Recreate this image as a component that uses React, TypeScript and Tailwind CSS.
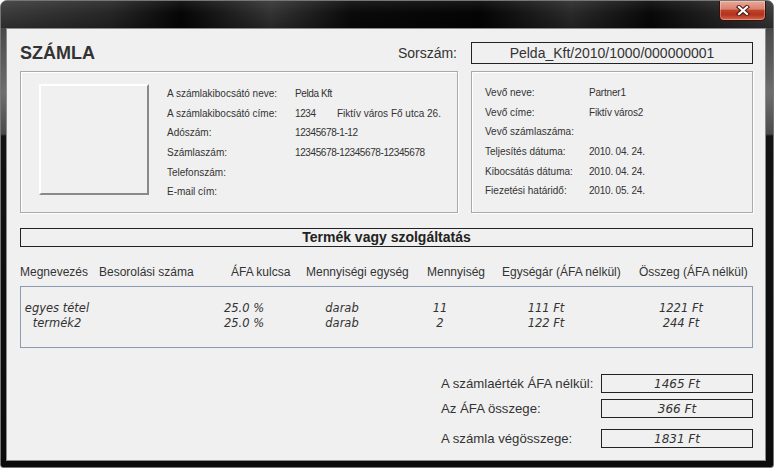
import React from "react";

const arial = "font-['Liberation_Sans',Arial,sans-serif]";
const dejavu = "font-['DejaVu_Sans',Verdana,sans-serif]";

const seller: [string, string, string?][] = [
  ["A számlakibocsátó neve:", "Pelda Kft"],
  ["A számlakibocsátó címe:", "1234", "Fiktív város Fő utca 26."],
  ["Adószám:", "12345678-1-12"],
  ["Számlaszám:", "12345678-12345678-12345678"],
  ["Telefonszám:", ""],
  ["E-mail cím:", ""],
];

const buyer: [string, string][] = [
  ["Vevő neve:", "Partner1"],
  ["Vevő címe:", "Fiktív város2"],
  ["Vevő számlaszáma:", ""],
  ["Teljesítés dátuma:", "2010. 04. 24."],
  ["Kibocsátás dátuma:", "2010. 04. 24."],
  ["Fiezetési határidő:", "2010. 05. 24."],
];

const headers = [
  "Megnevezés",
  "Besorolási száma",
  "ÁFA kulcsa",
  "Mennyiségi egység",
  "Mennyiség",
  "Egységár (ÁFA nélkül)",
  "Összeg (ÁFA nélkül)",
];

const items = [
  { name: "egyes tétel", vat: "25.0 %", unit: "darab", qty: "11", price: "111 Ft", total: "1221 Ft" },
  { name: "termék2", vat: "25.0 %", unit: "darab", qty: "2", price: "122 Ft", total: "244 Ft" },
];

function CloseButton() {
  return (
    <div className="absolute right-[7px] top-0 w-[47px] h-[20px] rounded-b-[5px] border border-t-0 border-[#3a0f08] bg-[linear-gradient(180deg,#eaa898_0%,#d98370_42%,#c0402a_50%,#b2331f_72%,#d8664b_100%)] shadow-[inset_0_0_0_1px_rgba(255,255,255,0.3)] flex items-center justify-center">
      <svg width="14" height="11" viewBox="0 0 14 11">
        <path d="M3 2 L11 9 M11 2 L3 9" stroke="#4a1710" strokeWidth="4.2" strokeLinecap="square" />
        <path d="M3 2 L11 9 M11 2 L3 9" stroke="#ffffff" strokeWidth="2.2" strokeLinecap="square" />
      </svg>
    </div>
  );
}

function Total({ label, value, className = "" }: { label: string; value: string; className?: string }) {
  return (
    <div className={`flex items-center h-[19px] ${className}`}>
      <div className={`w-[160px] text-[13.2px] text-[#333] ${arial}`}>{label}</div>
      <div className={`w-[152px] h-[19px] border border-[#222] flex items-center justify-center italic text-[12px] text-[#333] ${dejavu}`}>
        {value}
      </div>
    </div>
  );
}

export default function App() {
  return (
    <div className="relative w-[774px] h-[468px] flex flex-col overflow-hidden rounded-t-[7px] rounded-b-[3px] border border-[#767676] bg-[linear-gradient(180deg,#3a3a3a_0px,#6e6e6e_92px,#4a4a4a_133px,#131313_135px,#0b0b0b_100%)]">
      {/* title bar */}
      <div className="relative h-[27px] bg-[linear-gradient(90deg,#3b3b3b_0px,#262626_110px,#050505_180px,#333333_270px,#0a0a0a_350px,#040404_480px,#2a2a2a_570px,#080808_650px,#3a3a3a_774px)]">
        <div className="absolute inset-0 bg-[linear-gradient(180deg,rgba(255,255,255,0.08)_0%,rgba(0,0,0,0)_45%,rgba(0,0,0,0.25)_100%)]" />
        <CloseButton />
      </div>

      {/* client area */}
      <div className={`flex-1 ml-[5px] mr-[7px] mb-[6px] border border-[#8c8c8c] bg-[#f0f0f0] pl-[13px] pr-[12px] flex flex-col text-[#333] ${arial}`}>
        <div className="flex items-center h-[22px] mt-[13px]">
          <div className="font-bold text-[18px] leading-none text-[#333]">SZÁMLA</div>
          <div className="ml-auto text-[14px] leading-none">Sorszám:</div>
          <div className="ml-[14px] w-[282px] h-[22px] border border-[#222] flex items-center justify-center text-[14px] text-[#333]">
            Pelda_Kft/2010/1000/000000001
          </div>
        </div>

        <div className="flex gap-[13px] mt-[7px] h-[142px]">
          <div className="w-[438px] border border-[#a9a9a9] shadow-[inset_1px_1px_0_#ffffff,1px_1px_0_#ffffff] flex pl-[18px] pt-[12px]">
            <div className="w-[110px] h-[111px] border-2 border-t-white border-l-white border-r-[#8a8a8a] border-b-[#8a8a8a]" />
            <div className="ml-[18px] text-[10px]">
              {seller.map(([label, value, extra]) => (
                <div key={label} className="flex items-center h-[19.6px]">
                  <div className="w-[128px]">{label}</div>
                  <div className={`tracking-[-0.4px] ${extra ? "w-[42px]" : ""}`}>{value}</div>
                  {extra && <div>{extra}</div>}
                </div>
              ))}
            </div>
          </div>
          <div className="w-[282px] border border-[#a9a9a9] shadow-[inset_1px_1px_0_#ffffff,1px_1px_0_#ffffff] pl-[13px] pt-[11px] text-[10px]">
            {buyer.map(([label, value]) => (
              <div key={label} className="flex items-center h-[19.6px]">
                <div className="w-[104px]">{label}</div>
                <div className="tracking-[-0.2px]">{value}</div>
              </div>
            ))}
          </div>
        </div>

        <div className="mt-[15px] h-[19px] border border-[#222] flex items-center justify-center font-bold text-[14px] text-[#222]">
          Termék vagy szolgáltatás
        </div>

        <div className="mt-[16px] h-[18px] grid grid-cols-[79px_132px_75px_121px_75px_137px_113px] items-center text-[12px] whitespace-nowrap">
          {headers.map((h) => (
            <div key={h}>{h}</div>
          ))}
        </div>

        <div className={`mt-[5px] h-[62px] border border-[#8b9bb2] pt-[14px] italic text-[11.5px] text-[#333] ${dejavu}`}>
          {items.map((it) => (
            <div key={it.name} className="flex h-[15px] leading-[15px] whitespace-nowrap">
              <div className="w-[72px] text-center">{it.name}</div>
              <div className="ml-[111px] w-[80px] text-center">{it.vat}</div>
              <div className="ml-[18px] w-[80px] text-center">{it.unit}</div>
              <div className="ml-[28px] w-[60px] text-center">{it.qty}</div>
              <div className="ml-[26px] w-[100px] text-center">{it.price}</div>
              <div className="ml-[35px] w-[100px] text-center">{it.total}</div>
            </div>
          ))}
        </div>

        <div className="ml-auto w-[312px] mt-[26px]">
          <Total label="A számlaérték ÁFA nélkül:" value="1465 Ft" />
          <Total label="Az ÁFA összege:" value="366 Ft" className="mt-[6px]" />
          <Total label="A számla végösszege:" value="1831 Ft" className="mt-[11px]" />
        </div>
      </div>
    </div>
  );
}
